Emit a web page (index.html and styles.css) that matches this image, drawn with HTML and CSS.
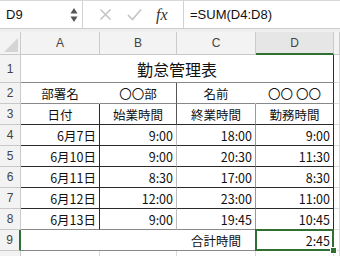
FILE: index.html
```html
<!DOCTYPE html>
<html lang="ja">
<head>
<meta charset="utf-8">
<link rel="stylesheet" href="styles.css">
</head>
<body>
<div class="fbar">
  <div class="namebox">
    <span class="ref">D9</span>
    <svg class="spin" width="8" height="16" viewBox="0 0 8 16"><path d="M4 1 L7.5 6.5 L0.5 6.5 Z" fill="#555"/><path d="M4 15 L7.5 9.5 L0.5 9.5 Z" fill="#555"/></svg>
  </div>
  <div class="tools">
    <svg width="13" height="13" viewBox="0 0 13 13"><path d="M1.5 1.5 L11.5 11.5 M11.5 1.5 L1.5 11.5" stroke="#c4c4c4" stroke-width="1.6" fill="none"/></svg>
    <svg width="15" height="13" viewBox="0 0 15 13"><path d="M1 7 L5.5 11.5 L14 1.5" stroke="#c4c4c4" stroke-width="1.6" fill="none"/></svg>
    <span class="fx">fx</span>
  </div>
  <div class="formula">=SUM(D4:D8)</div>
</div>
<div class="strip"></div>
<div class="sheet">
  <div class="c hd corner"><span class="tri"></span></div>
  <div class="c hd">A</div>
  <div class="c hd">B</div>
  <div class="c hd">C</div>
  <div class="c hd on">D</div>
  <div class="c hd"></div>

  <div class="c hd">1</div>
  <div class="c m title span4 br-k bb-g">勤怠管理表</div>
  <div class="c"></div>

  <div class="c hd">2</div>
  <div class="c m br-w bb-g">部署名</div>
  <div class="c m br-d bb-g">〇〇部</div>
  <div class="c m br-w bb-g">名前</div>
  <div class="c m br-k bb-g">〇〇 〇〇</div>
  <div class="c"></div>

  <div class="c hd">3</div>
  <div class="c m br-k bb-k">日付</div>
  <div class="c m br-d bb-k">始業時間</div>
  <div class="c m br-g bb-k">終業時間</div>
  <div class="c m br-k bb-k">勤務時間</div>
  <div class="c"></div>

  <div class="c hd">4</div>
  <div class="c r br-k bb-k">6月7日</div>
  <div class="c r br-l bb-k">9:00</div>
  <div class="c r br-g bb-k">18:00</div>
  <div class="c r br-k bb-k">9:00</div>
  <div class="c"></div>

  <div class="c hd">5</div>
  <div class="c r br-k bb-k">6月10日</div>
  <div class="c r br-l bb-k">9:00</div>
  <div class="c r br-g bb-k">20:30</div>
  <div class="c r br-k bb-k">11:30</div>
  <div class="c"></div>

  <div class="c hd">6</div>
  <div class="c r br-k bb-k">6月11日</div>
  <div class="c r br-l bb-k">8:30</div>
  <div class="c r br-g bb-k">17:00</div>
  <div class="c r br-k bb-k">8:30</div>
  <div class="c"></div>

  <div class="c hd">7</div>
  <div class="c r br-k bb-k">6月12日</div>
  <div class="c r br-l bb-k">12:00</div>
  <div class="c r br-g bb-k">23:00</div>
  <div class="c r br-k bb-k">11:00</div>
  <div class="c"></div>

  <div class="c hd">8</div>
  <div class="c r br-k bb-g">6月13日</div>
  <div class="c r br-l bb-g">9:00</div>
  <div class="c r br-g bb-g">19:45</div>
  <div class="c r br-k bb-g">10:45</div>
  <div class="c"></div>

  <div class="c hd selrow">9</div>
  <div class="c span3 total br-g bb-g"><span>合計時間</span></div>
  <div class="c r sel">2:45</div>
  <div class="c"></div>

  <div class="c hd">10</div>
  <div class="c"></div>
  <div class="c"></div>
  <div class="c"></div>
  <div class="c"></div>
  <div class="c"></div>
</div>
</body>
</html>
```
FILE: styles.css
```css
body {
  margin: 0;
  width: 340px;
  height: 256px;
  overflow: hidden;
  background: #fff;
  font-family: "Noto Sans CJK JP", sans-serif;
}

.fbar {
  display: flex;
  height: 29px;
  box-sizing: border-box;
  border-top: 1px solid #d8d8d8;
  border-bottom: 1px solid #cccccc;
  background: #fff;
}

.namebox {
  width: 83px;
  box-sizing: border-box;
  border-right: 1px solid #d2d2d2;
  display: flex;
  align-items: center;
  justify-content: space-between;
  padding: 0 4px 0 6px;
}

.ref {
  font-family: "Liberation Sans", sans-serif;
  font-size: 13px;
  color: #111;
}

.tools {
  width: 101px;
  box-sizing: border-box;
  border-right: 1px solid #d2d2d2;
  display: flex;
  align-items: center;
  padding-left: 16px;
  gap: 15px;
}

.fx {
  font-family: "Liberation Serif", serif;
  font-style: italic;
  font-size: 16px;
  color: #333;
  margin-left: -1px;
}

.formula {
  flex: 1;
  display: flex;
  align-items: center;
  padding-left: 6px;
  font-family: "Liberation Sans", sans-serif;
  font-size: 13px;
  color: #111;
}

.strip {
  height: 3px;
  background: #efefef;
}

.sheet {
  display: grid;
  grid-template-columns: 21px 79px 77px 79px 78px 6px;
  grid-template-rows: 23px 28px repeat(9, 21px);
}

.c {
  box-sizing: border-box;
  border-right: 1px solid #dadada;
  border-bottom: 1px solid #dadada;
  display: flex;
  align-items: center;
  font-size: 12.5px;
  color: #111;
  white-space: nowrap;
  overflow: hidden;
}

.r {
  justify-content: flex-end;
  padding-right: 3px;
}

.m {
  justify-content: center;
}

.hd {
  background: #f3f3f3;
  border-right-color: #cbcbcb;
  border-bottom-color: #c8c8c8;
  font-family: "Liberation Sans", sans-serif;
  font-size: 12px;
  color: #444;
  justify-content: center;
}

.hd.on {
  background: #e6e6e6;
  border-bottom: 2px solid #2f7032;
}

.selrow {
  border-right: 2px solid #2f7032;
}

.corner {
  position: relative;
}

.tri {
  position: absolute;
  right: 2px;
  bottom: 2px;
  width: 14px;
  height: 14px;
  background: #d4d4d4;
  clip-path: polygon(100% 0, 100% 100%, 0 100%);
}

.title {
  font-size: 16px;
}

.span4 {
  grid-column: span 4;
}

.span3 {
  grid-column: span 3;
}

.total {
  padding-left: 156px;
}

.total span {
  width: 79px;
  text-align: center;
}

.br-k { border-right-color: #2a2a2a; }
.br-d { border-right-color: #555; }
.br-g { border-right-color: #999; }
.br-l { border-right-color: #bdbdbd; }
.br-w { border-right-color: #fff; }
.bb-k { border-bottom-color: #2a2a2a; }
.bb-g { border-bottom-color: #888; }

.sel {
  position: relative;
  overflow: visible;
}

.sel::after {
  content: "";
  position: absolute;
  left: -1px;
  top: -1px;
  right: -1px;
  bottom: -1px;
  border: 2px solid #2f7032;
}

.sel::before {
  content: "";
  position: absolute;
  right: -4px;
  bottom: -4px;
  width: 5px;
  height: 5px;
  background: #2f7032;
  border: 1px solid #fff;
  z-index: 2;
}
```
